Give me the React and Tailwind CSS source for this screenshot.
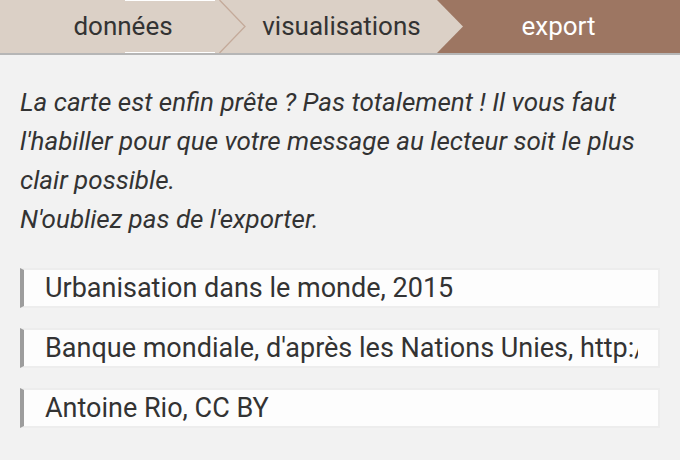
export default function App() {
  const fieldClasses = "w-full h-[40px] bg-[#fdfdfd] border-2 border-[#ededed] border-l-4 border-l-[#9d9d9d] pl-[21px] pr-[20px] text-[27px] text-[#333] outline-none";
  return (
    <div className="w-[680px] h-[460px] bg-[#f2f2f2] font-['Roboto',sans-serif] overflow-hidden">
      {/* Steps bar */}
      <div className="flex h-[55px] bg-[#dbd0c6] border-b-2 border-[#b6b6b6] text-[26px]">
        <div className="relative w-[246px] flex items-center justify-center text-[#333]">
          <span className="absolute left-[125px] top-0 w-[90px] h-px bg-white" />
          <span className="absolute left-[125px] bottom-0 w-[90px] h-px bg-white" />
          données
          <svg className="absolute right-0 top-0 h-[53px] w-[27px]" viewBox="0 0 27 53">
            <polyline points="0.5,0 26,26.5 0.5,53" fill="none" stroke="#c4aa9a" strokeWidth="1.3" />
          </svg>
        </div>
        <div className="w-[191px] flex items-center justify-center text-[#333]">
          visualisations
        </div>
        <div className="relative flex-1 bg-[#9d7662] flex items-center justify-center text-white">
          <svg className="absolute left-0 top-0 h-[53px] w-[27px]" viewBox="0 0 27 53">
            <polygon points="0,0 26,26.5 0,53" fill="#dbd0c6" />
          </svg>
          export
        </div>
      </div>

      {/* Intro */}
      <p className="px-[20px] pt-[28px] text-[26px] leading-[39px] italic text-[#333] whitespace-nowrap">
        La carte est enfin prête ? Pas totalement ! Il vous faut<br />
        l'habiller pour que votre message au lecteur soit le plus<br />
        clair possible.<br />
        N'oubliez pas de l'exporter.
      </p>

      {/* Fields */}
      <div className="flex flex-col gap-[20px] px-[20px] mt-[29px]">
        <input className={fieldClasses} defaultValue="Urbanisation dans le monde, 2015" />
        <input className={fieldClasses} defaultValue="Banque mondiale, d'après les Nations Unies, http://donnees.banquemondiale.org" />
        <input className={fieldClasses} defaultValue="Antoine Rio, CC BY" />
      </div>
    </div>
  );
}
